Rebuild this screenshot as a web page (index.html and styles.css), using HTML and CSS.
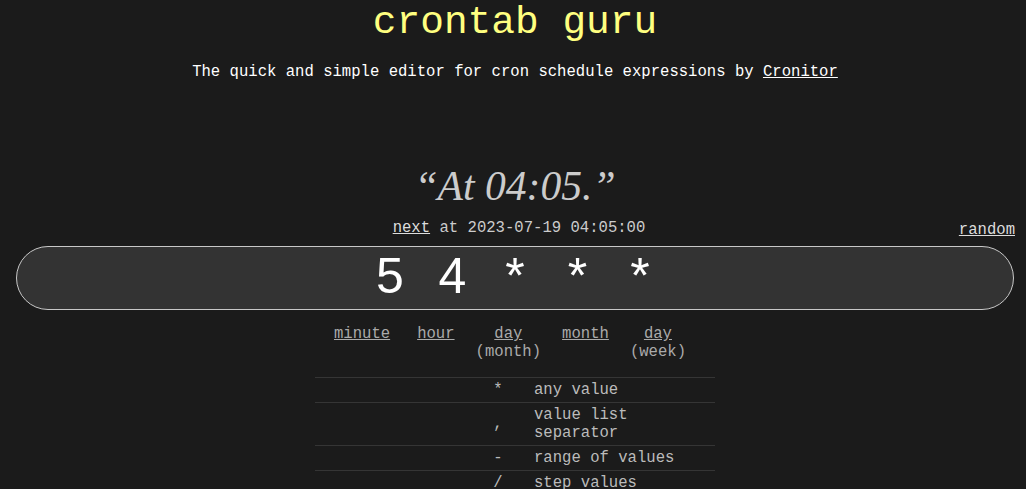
FILE: index.html
```html
<!DOCTYPE html>
<html lang="en">
<head>
	<meta charset="UTF-8">
	<title>Crontab.guru - The cron schedule expression editor</title>
	<link rel="stylesheet" href="styles.css">
</head>
<body>
	<h1 class="title">crontab guru</h1>
	<p class="tagline">The quick and simple editor for cron schedule expressions by <a href="#">Cronitor</a></p>

	<div class="editor">
		<div class="human">&ldquo;At 04:05.&rdquo;</div>
		<div class="next-row">
			<span></span>
			<div class="next"><a href="#">next</a> at 2023-07-19 04:05:00</div>
			<a class="random" href="#">random</a>
		</div>
		<div class="cron">
			<span>5</span><span>4</span><span>*</span><span>*</span><span>*</span>
		</div>
		<div class="parts">
			<div class="part minute"><u>minute</u></div>
			<div class="part"><u>hour</u></div>
			<div class="part"><u>day</u><br>(month)</div>
			<div class="part"><u>month</u></div>
			<div class="part"><u>day</u><br>(week)</div>
		</div>
		<table class="legend">
			<tr><th>*</th><td>any value</td></tr>
			<tr><th>,</th><td>value list separator</td></tr>
			<tr><th>-</th><td>range of values</td></tr>
			<tr><th>/</th><td>step values</td></tr>
		</table>
	</div>
</body>
</html>
```

FILE: styles.css
```css
* {
	padding: 0;
	margin: 0;
}
html, body {
	background: #1b1b1b;
	color: #ccc;
	font-family: "Liberation Mono", "Courier New", monospace;
	font-size: 15.6px;
	line-height: 18px;
}
body {
	padding: 0 12px 0 16px;
}
a {
	color: #ddd;
}
.title {
	font-size: 39.5px;
	line-height: 46px;
	font-weight: normal;
	color: #ffff80;
	text-align: center;
}
.tagline {
	margin-top: 16.5px;
	color: #fff;
	text-align: center;
}
.tagline a {
	color: #fff;
}
.human {
	margin-top: 82.3px;
	font-family: "Liberation Serif", "Times New Roman", serif;
	font-style: italic;
	font-size: 41.6px;
	line-height: 46px;
	color: #ccc;
	text-align: center;
}
.next-row {
	display: grid;
	grid-template-columns: 1fr auto 1fr;
	margin-top: 10px;
}
.next {
	padding-left: 8px;
	color: #ccc;
}
.random {
	justify-self: end;
	padding-top: 2.3px;
	margin-right: -1px;
}
.cron {
	display: flex;
	justify-content: center;
	gap: 31.25px;
	margin-top: 6.5px;
	height: 58px;
	padding-bottom: 4px;
	background: #333;
	border: 1px solid #c8c8c8;
	border-radius: 32px;
	font-family: "Liberation Sans", Arial, sans-serif;
	font-size: 50px;
	line-height: 58px;
	color: #fff;
}
.cron span {
	width: 31.25px;
	text-align: center;
}
.parts {
	display: flex;
	justify-content: center;
	gap: 21px;
	margin-top: 15.8px;
	padding-right: 10px;
	color: #aaa;
	text-align: center;
}
.part.minute {
	margin-right: 6px;
}
.legend {
	width: 400px;
	margin: 16px auto 0;
	border-collapse: collapse;
	color: #bbb;
}
.legend tr {
	border-top: 1px solid #353535;
}
.legend th {
	width: 50%;
	font-weight: normal;
	text-align: right;
	padding: 3px 12.5px 3px 0;
}
.legend td {
	text-align: left;
	padding: 3px 0 3px 19px;
}
```
